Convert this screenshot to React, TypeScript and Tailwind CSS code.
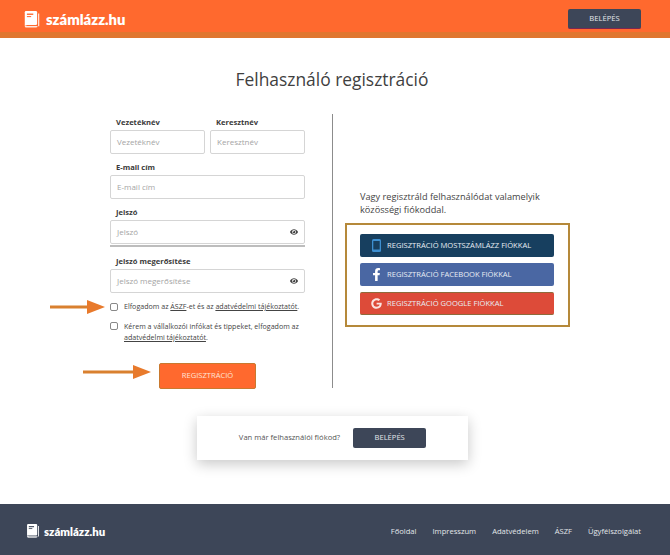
import { FaEye, FaFacebookF, FaGoogle } from "react-icons/fa";

const sans = "font-['Open_Sans',sans-serif]";

function Logo({ small }: { small?: boolean }) {
  return (
    <div className={`flex items-center ${small ? "gap-[5px]" : "gap-[6px]"}`}>
      <svg
        width={small ? 12 : 16}
        height={small ? 14 : 17}
        viewBox="0 0 17 20"
        fill="none"
      >
        <path d="M0 1.5 Q0 0 1.5 0 H13 Q14.5 0 14.5 1.5 V15 Q14.5 16.5 13 16.5 H0 Z" fill="#fff" />
        <path d="M0 16.5 V18 Q0 19.5 1.5 19.5 H13 Q15 19.5 15 18 V17.5 H3 Z" fill="#fff" opacity="0.85" />
        <path d="M15.8 3 H17 V18 H15.8 Z" fill="#fff" />
        <rect x="2.5" y="3" width="7.5" height="1.6" fill={small ? "#3d4658" : "#ff692e"} />
        <rect x="2.5" y="6" width="5" height="1.2" fill={small ? "#3d4658" : "#ff692e"} />
      </svg>
      <span
        className={`font-['Lato',sans-serif] font-extrabold text-white ${small ? "text-[11.4px]" : "text-[14.8px]"}`}
      >
        számlázz.hu
      </span>
    </div>
  );
}

function Field({
  label,
  eye,
  className,
}: {
  label: string;
  eye?: boolean;
  className?: string;
}) {
  return (
    <div className={className}>
      <div className="h-[16px] pl-[6px] text-[7.6px] leading-[16px] font-bold text-[#3a3a3a]">
        {label}
      </div>
      <div className="flex h-[24px] items-center justify-between rounded-[2px] border border-[#d5d5d5] bg-white px-[6px]">
        <span className="text-[8px] text-[#a5a5a5]">{label}</span>
        {eye && <FaEye size={8} className="text-[#444]" />}
      </div>
    </div>
  );
}

function Arrow({ width, className }: { width: number; className: string }) {
  return (
    <svg
      width={width}
      height="14"
      viewBox={`0 0 ${width} 14`}
      className={`absolute ${className}`}
    >
      <rect x="0" y="5.5" width={width - 16} height="3" fill="#d9802f" />
      <path d={`M${width - 18} 0 L${width} 7 L${width - 18} 14 Z`} fill="#e87a2c" />
    </svg>
  );
}

function SocialButton({
  icon,
  text,
  className,
}: {
  icon: React.ReactNode;
  text: string;
  className: string;
}) {
  return (
    <div
      className={`flex h-[23px] items-center rounded-[2px] pl-[6px] text-[7.6px] text-[#e8edf3] ${className}`}
    >
      <span className="flex w-[21px] justify-center">{icon}</span>
      <span>{text}</span>
    </div>
  );
}

export default function App() {
  return (
    <div className={`relative flex h-[555px] w-[670px] flex-col overflow-hidden bg-white ${sans}`}>
      <header className="flex h-[38px] shrink-0 items-start justify-between border-b-[6px] border-[#e0762f] bg-[#ff692e] pl-[24px] pr-[29px]">
        <div className="pt-[8px]">
          <Logo />
        </div>
        <div className="mt-[9px] flex h-[20px] w-[73px] items-center justify-center rounded-[2px] border-b border-[#7c2650] bg-[#3d4658] text-[7.6px] text-[#e3e6ea]">
          BELÉPÉS
        </div>
      </header>

      <h1 className="mt-[28px] pr-[6px] text-center text-[17.4px] leading-[26px] text-[#3f3f3f]">
        Felhasználó regisztráció
      </h1>

      <main className="mt-[22px] flex h-[274px]">
        <div className="relative w-[333px] border-r border-[#8c8c8c] pl-[110px] pr-[27px]">
          <div className="flex gap-[5px]">
            <Field label="Vezetéknév" className="w-[95px]" />
            <Field label="Keresztnév" className="w-[95px]" />
          </div>
          <Field label="E-mail cím" className="mt-[5px] w-[195px]" />
          <Field label="Jelszó" eye className="mt-[5px] w-[195px]" />
          <div className="mt-[1px] h-[2px] w-[195px] bg-[#bdbdbd]" />
          <Field label="Jelszó megerősítése" eye className="mt-[6px] w-[195px]" />

          <label className="mt-[8px] flex items-center gap-[6px] text-[7.1px] leading-[11px] whitespace-nowrap text-[#444]">
            <span className="h-[8px] w-[8px] shrink-0 rounded-[2px] border border-[#888] bg-white" />
            <span>
              Elfogadom az <u>ÁSZF</u>-et és az <u>adatvédelmi tájékoztatót</u>.
            </span>
          </label>
          <label className="mt-[9px] flex items-start gap-[6px] text-[7.1px] leading-[11px] text-[#444]">
            <span className="mt-[1px] h-[8px] w-[8px] shrink-0 rounded-[2px] border border-[#888] bg-white" />
            <span className="w-[180px]">
              Kérem a vállalkozói infókat és tippeket, elfogadom az{" "}
              <u>adatvédelmi tájékoztatót</u>.
            </span>
          </label>
          <div className="ml-[49px] mt-[20px] flex h-[26px] w-[97px] items-center justify-center rounded-[2px] border border-[#c9792f] bg-[#ff692e] text-[7.6px] text-[#ffe3d6]">
            REGISZTRÁCIÓ
          </div>

          <Arrow width={55} className="left-[50px] top-[186px]" />
          <Arrow width={68} className="left-[83px] top-[251px]" />
        </div>

        <div className="pl-[12px] pt-[76px]">
          <p className="ml-[15px] w-[200px] text-[9.2px] leading-[13px] text-[#444]">
            Vagy regisztráld felhasználódat valamelyik közösségi fiókoddal.
          </p>
          <div className="mt-[7px] flex h-[104px] w-[225px] flex-col gap-[6px] border-2 border-[#b5893a] pl-[13px] pr-[14px] pt-[9px]">
            <SocialButton
              className="bg-[#173f5f]"
              text="REGISZTRÁCIÓ MOSTSZÁMLÁZZ FIÓKKAL"
              icon={
                <svg width="9" height="13" viewBox="0 0 9 13">
                  <rect x="0" y="0" width="9" height="13" rx="1.5" fill="#3d8fd1" />
                  <rect x="1.3" y="2" width="6.4" height="8.5" fill="#173f5f" />
                </svg>
              }
            />
            <SocialButton
              className="bg-[#4a67a3]"
              text="REGISZTRÁCIÓ FACEBOOK FIÓKKAL"
              icon={<FaFacebookF size={13} className="text-white" />}
            />
            <SocialButton
              className="border-y border-[#8f6a3a] bg-[#dd4b39]"
              text="REGISZTRÁCIÓ GOOGLE FIÓKKAL"
              icon={<FaGoogle size={11} className="text-[#fbe4e0]" />}
            />
          </div>
        </div>
      </main>

      <div className="ml-[197px] mt-[28px] flex h-[44px] w-[271px] items-center justify-center gap-[13px] bg-white shadow-[0_4px_14px_rgba(0,0,0,0.22)]">
        <span className="text-[7.6px] text-[#555]">Van már felhasználói fiókod?</span>
        <div className="flex h-[20px] w-[73px] items-center justify-center rounded-[2px] bg-[#3d4658] text-[7.6px] text-[#e3e6ea]">
          BELÉPÉS
        </div>
      </div>

      <footer className="mt-auto flex h-[51px] items-center justify-between bg-[#3d4658] pl-[27px] pr-[29px] pt-[4px]">
        <Logo small />
        <nav className="flex gap-[16px] text-[7.6px] text-[#e3e6ea]">
          <span>Főoldal</span>
          <span>Impresszum</span>
          <span>Adatvédelem</span>
          <span>ÁSZF</span>
          <span>Ügyfélszolgálat</span>
        </nav>
      </footer>
    </div>
  );
}
